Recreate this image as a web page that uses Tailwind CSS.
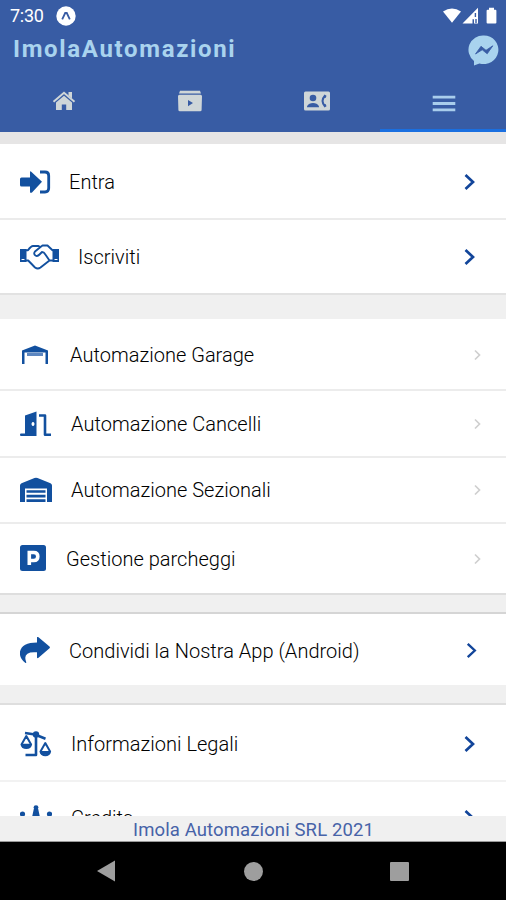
<!DOCTYPE html>
<html lang="it">
<head>
<meta charset="utf-8">
<title>ImolaAutomazioni</title>
<script src="https://cdn.jsdelivr.net/npm/@tailwindcss/browser@4"></script>
</head>
<body class="bg-black">
<div class="flex h-[900px] w-[506px] flex-col overflow-hidden bg-[#f0f0f0] font-[Roboto,sans-serif] text-[#222]">

  <header class="flex h-[132px] shrink-0 flex-col bg-[#385ca4]">
    <div class="flex h-[32px] items-center pr-[8px] pl-[10px] text-white">
      <span class="w-[46px] text-[18px] leading-[32px] tracking-[-0.3px]">7:30</span>
      <svg class="h-5 w-5" viewBox="0 0 20 20"><circle cx="10" cy="10" r="9.7" fill="#fff"/><path d="M6.2 13.3 9.2 7h1.6l3 6.3" fill="none" stroke="#385ca4" stroke-width="1.8"/></svg>
      <svg class="ml-auto h-[18px] w-[56px]" viewBox="0 0 56 18" fill="#fff"><path d="M1 4.5Q10-1.6 19 4.5L10 15.8Z"/><path d="M20.5 16.5 36 .8v15.7H32v-4.2h-1.5v4.2z"/><path d="M33.4 6v4M34 12v4" stroke="#385ca4" stroke-width="1.4"/><path d="M47 .7h5v2h1.4q1 0 1 1v11.8q0 1-1 1h-7.800q-1 0-1-1V3.700q0-1 1-1H47z"/></svg>
    </div>
    <div class="flex h-[34px] items-center pr-[7px] pl-[13px]">
      <h1 class="text-[24px] leading-[34px] font-bold tracking-[1.65px] text-[#a9d3ee]">ImolaAutomazioni</h1>
      <svg class="mt-[3px] ml-auto h-[31px] w-[31px]" viewBox="0 0 31 31"><path d="M16 .5a14.5 14.300 0 1 1-4.600 27.900L6 30.500V26A14.500 14.300 0 0 1 16 .5z" fill="#a9d3ee"/><path d="M7.500 19 13 11.300l5 4 6.800-4.500L19.200 18.800l-5-4z" fill="#385ca4" stroke="#385ca4" stroke-width=".8"/></svg>
    </div>
    <nav class="grid h-[66px] grid-cols-4">
      <div class="flex items-center justify-center pl-[2px]"><svg class="mt-1 h-[20px] w-[24px]" viewBox="0 0 24 20"><path d="M12 4.700 20 11.500V19h-5.800v-5.500H9.800V19H4v-7.500z" fill="#cfd6d8"/><path d="m1.500 10.800 10.500-9 10.500 9" fill="none" stroke="#cfd6d8" stroke-width="2"/><path d="M16.500 1H20v6.500l-3.500-3z" fill="#cfd6d8"/></svg></div>
      <div class="flex items-center justify-center pl-px"><svg class="mt-1 h-[22px] w-[26px]" viewBox="0 0 26 22" fill="#cfd6d8"><path d="M3 .8h20l1 2.700H2z"/><path fill-rule="evenodd" d="M2.500 4.800h21q1.500 0 1.500 1.500l-.4 13.700q0 1.300-1.500 1.300H2.900q-1.500 0-1.500-1.300L1 6.300q0-1.500 1.500-1.500zM11 10v6.200l5-3.100z"/></svg></div>
      <div class="flex items-center justify-center pl-[2px]"><svg class="mt-1 h-[20px] w-[26px]" viewBox="0 0 26 20"><rect y=".5" width="26" height="19" rx="1.500" fill="#cfd6d8"/><g fill="#385ca4"><circle cx="9" cy="7" r="3.300"/><path d="M3 16.300v-1q2-3.200 6-3.200t6 3.200v1z"/><path d="m20.500 3.500 2 1.300-.7 2-1.500.5q-1.500 2.700 0 5.400l1.500.5.7 2-2 1.300q-6-6.500 0-13z"/></g></svg></div>
      <div class="flex items-center justify-center border-b-[3px] border-[#1a6fe0] pl-[2px]"><svg class="mt-[12px] h-[17px] w-[24px]" viewBox="0 0 24 17"><path d="M.7 2.200h22.600M.7 8.500h22.600M.7 14.800h22.600" stroke="#a9cdec" stroke-width="2.800"/></svg></div>
    </nav>
  </header>

  <main class="flex h-[684px] shrink-0 flex-col overflow-hidden text-[20px] leading-6 font-light tracking-[0.02px] text-black">
    <div class="h-[12px] shrink-0 bg-[#e6e5e5]"></div>

    <section class="shrink-0 bg-white">
      <div class="flex h-[76px] items-center border-b-2 border-[#ebebeb] pt-[2px] pr-[30px] pl-[20px]">
        <svg class="mr-[18px] h-[24px] w-[31px]" viewBox="0 0 31 24"><path d="M1.500 7.500H10V2.500q0-2 1.500-.6L22 11.800 12 22.500Q10 23.800 10 21.500V16.500H1.500Q0 16.500 0 15V9q0-1.500 1.500-1.500z" fill="#12509f"/><path d="M20 2h5q3.700 0 3.700 3.700v12.600q0 3.700-3.700 3.700h-5" fill="none" stroke="#12509f" stroke-width="2.800"/></svg>
        <span>Entra</span>
        <svg class="ml-auto h-[18px] w-[13px]" viewBox="0 0 13 18"><path d="m2.500 2 7.500 7-7.500 7" fill="none" stroke="#12459a" stroke-width="2.700"/></svg>
      </div>
      <div class="flex h-[75px] items-center border-b-2 border-[#e2e2e2] pt-px pr-[30px] pl-[20px]">
        <svg class="mr-[19px] h-[26px] w-[39px]" viewBox="0 0 39 26" fill="none" stroke="#12509f" stroke-width="1.900" stroke-linejoin="round" stroke-linecap="round"><path d="M0 5h6.500v13H0zM32.500 5H39v13h-6.500z" fill="#12509f" stroke="none"/><path d="M2 15.500h2M35 15.500h2" stroke="#fff" stroke-width="1.200"/><path d="M6.500 6.200h1.500Q11 2 13 2h5.500l2 1 2-1.500h5l5 4.700M6.500 16.500h1.700l6.800 7q2.800 2 5.500 0l9-7h3M20.500 3l-5.500 4.500q-1.800 2.500.5 4 2 1.200 4-1l2.500-2.500q2 0 3 2l4.500 6.500"/></svg>
        <span>Iscriviti</span>
        <svg class="ml-auto h-[18px] w-[13px]" viewBox="0 0 13 18"><path d="m2.500 2 7.500 7-7.500 7" fill="none" stroke="#12459a" stroke-width="2.700"/></svg>
      </div>
    </section>

    <section class="mt-[24px] shrink-0 bg-white">
      <div class="flex h-[72px] items-center border-b-2 border-[#ececec] pt-[2px] pr-[24px] pl-[22px]">
        <svg class="mr-[22px] h-[20px] w-[26px]" viewBox="0 0 26 20"><path d="M0 5.500 13 .5l13 5V19h-2.500V7.500h-21V19H0z" fill="#12509f"/><path d="M5 9.500h16" stroke="#5c86c0" stroke-width="3"/></svg>
        <span>Automazione Garage</span>
        <svg class="ml-auto h-[12px] w-[9px]" viewBox="0 0 9 12"><path d="m2 1.500 4.500 4.500L2 10.500" fill="none" stroke="#cfcfcf" stroke-width="1.700"/></svg>
      </div>
      <div class="flex h-[67px] items-center border-b-2 border-[#ececec] pr-[24px] pl-[20px]">
        <svg class="mr-[20px] h-[26px] w-[31px]" viewBox="0 0 31 26"><path fill-rule="evenodd" d="M5 4.500 16.500.5V25H1q-1 0-1-1.200T1 22.500h4zM13 11a1.500 2 0 1 0 .01 0z" fill="#12509f"/><path d="M19 4.500h6V23.800h6" fill="none" stroke="#12509f" stroke-width="2.600" stroke-linejoin="round"/></svg>
        <span>Automazione Cancelli</span>
        <svg class="ml-auto h-[12px] w-[9px]" viewBox="0 0 9 12"><path d="m2 1.500 4.500 4.500L2 10.500" fill="none" stroke="#cfcfcf" stroke-width="1.700"/></svg>
      </div>
      <div class="flex h-[66px] items-center border-b-2 border-[#ececec] pr-[24px] pl-[20px]">
        <svg class="mr-[19px] h-[26px] w-[32px]" viewBox="0 0 32 26"><path d="M0 8.500Q0 7 1.500 6.300L14.500 1q1.500-.7 3 0l13 5.300Q32 7 32 8.500V25h-5V11.500H5V25H0z" fill="#12509f"/><path d="M6.500 14.500h19M6.500 19.200h19M6.500 23.700h19" stroke="#12509f" stroke-width="2.700"/></svg>
        <span>Automazione Sezionali</span>
        <svg class="ml-auto h-[12px] w-[9px]" viewBox="0 0 9 12"><path d="m2 1.500 4.500 4.500L2 10.500" fill="none" stroke="#cfcfcf" stroke-width="1.700"/></svg>
      </div>
      <div class="flex h-[71px] items-center border-b-2 border-[#dedede] pr-[24px] pl-[20px]">
        <svg class="-mt-[2px] mr-[20px] h-[26px] w-[26px]" viewBox="0 0 26 26"><rect width="26" height="26" rx="2.500" fill="#12509f"/><path d="M9.300 20V7.500h4.500q4 0 4 4t-4 4H9.300" fill="none" stroke="#fff" stroke-width="3.600"/></svg>
        <span>Gestione parcheggi</span>
        <svg class="ml-auto h-[12px] w-[9px]" viewBox="0 0 9 12"><path d="m2 1.500 4.500 4.500L2 10.500" fill="none" stroke="#cfcfcf" stroke-width="1.700"/></svg>
      </div>
    </section>

    <section class="mt-[17px] shrink-0 border-t-2 border-[#d5d5d5] bg-white">
      <div class="flex h-[71px] items-center pt-[2px] pr-[28px] pl-[20px]">
        <svg class="mr-[19px] h-[27px] w-[30px]" viewBox="0 0 30 27"><path d="M17 .8q0-1.500 1.500-.5l11 9.200q.8.900 0 1.800l-11 9.500Q17 21.800 17 20.300v-5Q2 14 6.200 25q.2 1.500-1 .8Q-1 21 0 14.500 2 5.500 17 5.500z" fill="#12509f"/></svg>
        <span>Condividi la Nostra App (Android)</span>
        <svg class="ml-auto h-[17px] w-[13px]" viewBox="0 0 13 18"><path d="m2.500 2 7.500 7-7.500 7" fill="none" stroke="#12459a" stroke-width="2.500"/></svg>
      </div>
    </section>

    <section class="mt-[18px] shrink-0 border-t-2 border-[#dedede] bg-white">
      <div class="flex h-[77px] items-center border-b-2 border-[#f2f2f2] pt-[2px] pr-[30px] pl-[20px]">
        <svg class="mr-[19px] h-[26px] w-[32px]" viewBox="0 0 32 26" fill="none" stroke="#12509f" stroke-width="2.600" stroke-linejoin="round"><path d="M5 2 15 3.500l10.500 4.200M16 4v20H5.500"/><circle cx="16" cy="3.500" r="3.200" fill="#12509f" stroke="none"/><path d="M1.500 13.500 6.300 5l4.800 8.500q-.8 3.500-4.800 3.500t-4.800-3.500zM20.500 20.500l4.800-8.500 4.800 8.500q-.8 3.700-4.800 3.700t-4.800-3.700z" stroke-width="2"/><path d="M1 12.800h10.600L10 16.500H2.500zM20 20h10.600L29 23.700h-7.500z" fill="#12509f" stroke="none"/></svg>
        <span>Informazioni Legali</span>
        <svg class="ml-auto h-[18px] w-[13px]" viewBox="0 0 13 18"><path d="m2.500 2 7.500 7-7.500 7" fill="none" stroke="#12459a" stroke-width="2.700"/></svg>
      </div>
      <div class="flex h-[72px] items-center pr-[30px] pl-[20px]">
        <svg class="mr-[19px] h-[26px] w-[32px]" viewBox="0 0 32 26" fill="#12509f"><circle cx="16" cy="2.600" r="2.400"/><circle cx="2.500" cy="9" r="2.600"/><circle cx="29.500" cy="9" r="2.600"/><path d="m3 11 8 6 2.800-13h4.400l2.800 13 8-6-4 14H7z"/></svg>
        <span>Credits</span>
        <svg class="ml-auto h-[18px] w-[13px]" viewBox="0 0 13 18"><path d="m2.500 2 7.500 7-7.500 7" fill="none" stroke="#12459a" stroke-width="2.700"/></svg>
      </div>
    </section>
  </main>

  <footer class="h-[26px] shrink-0 border-b border-[#999] pl-px text-center text-[18.500px] leading-[29px] tracking-[0.12px] text-[#4763a8]">Imola Automazioni SRL 2021</footer>
  <div class="flex h-[58px] shrink-0 items-center justify-between bg-black pr-[97px] pl-[97px]">
    <svg class="h-[22px] w-[18px]" viewBox="0 0 18 22"><path d="M0 11 18 .5v21z" fill="#9e9e9e"/></svg>
    <div class="ml-[2px] h-[19px] w-[19px] rounded-full bg-[#9e9e9e]"></div>
    <div class="h-[19px] w-[19px] rounded-[1px] bg-[#9e9e9e]"></div>
  </div>
</div>
</body>
</html>
